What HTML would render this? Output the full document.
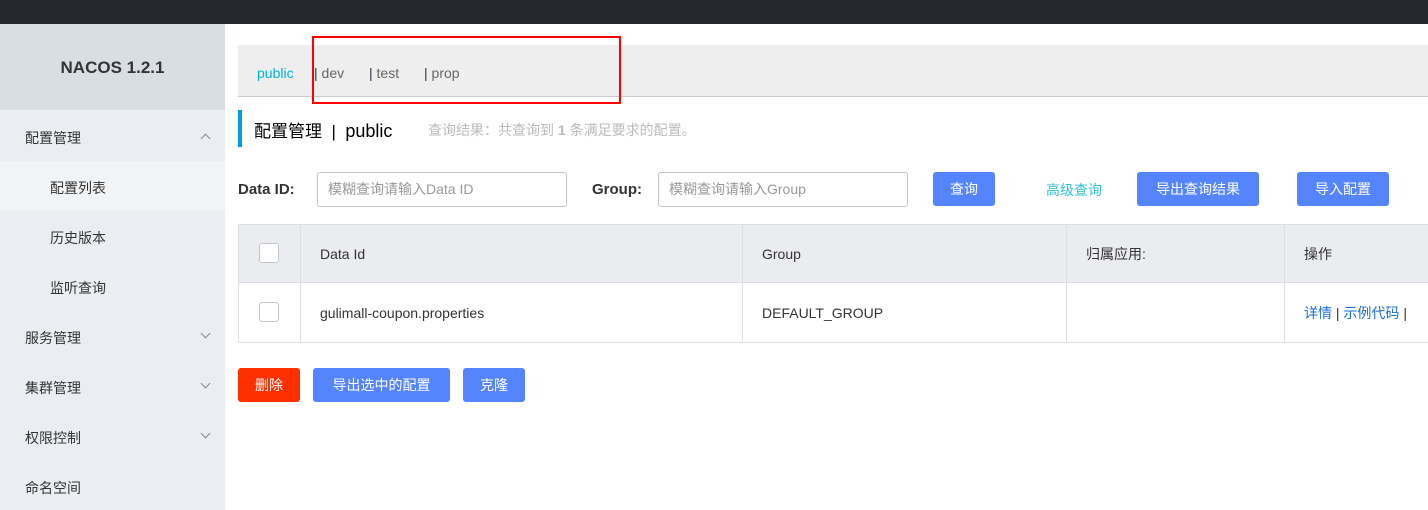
<!DOCTYPE html>
<html><head><meta charset="utf-8"><style>
*{margin:0;padding:0;box-sizing:border-box}
body{width:1428px;height:510px;overflow:hidden;background:#fff;font-family:"Liberation Sans","Noto Sans CJK SC",sans-serif;font-size:14px;color:#333;position:relative}
.a{position:absolute}
.side{left:0;top:24px;width:225px;height:486px;background:#eaedf1}
.mi{position:absolute;left:25px;font-size:14px;color:#333}
.chev{position:absolute;left:202px;width:7px;height:7px;border-right:1px solid #888;border-bottom:1px solid #888}
.btn{position:absolute;height:34px;line-height:34px;color:#fff;background:#5584ff;border-radius:3px;text-align:center;font-size:14px}
.inp{position:absolute;top:172px;height:35px;border:1px solid #c4c6cf;border-radius:3px;color:#999;padding-left:10px;line-height:33px;font-size:14px}
.lbl{position:absolute;top:181px;font-weight:bold;font-size:15px;color:#333}
.cb{position:absolute;left:259px;width:20px;height:20px;border:1px solid #c4c6cf;border-radius:3px;background:#fff}
.vl{position:absolute;width:1px;background:#dcdee3}
</style></head><body>
<div class="a" style="left:0;top:0;width:1428px;height:24px;background:#24282d"></div>
<div class="a side"></div>
<div class="a" style="left:0;top:24px;width:225px;height:86px;background:#d9dee5"></div>
<div class="a" style="left:0;top:58px;width:225px;text-align:center;font-weight:bold;font-size:17px;color:#333">NACOS 1.2.1</div>
<div class="mi" style="top:128px">配置管理</div>
<div class="chev" style="top:135px;transform:rotate(-135deg)"></div>
<div class="a" style="left:0;top:161px;width:225px;height:50px;background:#f2f3f5"></div>
<div class="mi" style="left:50px;top:178px">配置列表</div>
<div class="mi" style="left:50px;top:228px">历史版本</div>
<div class="mi" style="left:50px;top:278px">监听查询</div>
<div class="mi" style="top:328px">服务管理</div><div class="chev" style="top:330px;transform:rotate(45deg)"></div>
<div class="mi" style="top:378px">集群管理</div><div class="chev" style="top:380px;transform:rotate(45deg)"></div>
<div class="mi" style="top:428px">权限控制</div><div class="chev" style="top:430px;transform:rotate(45deg)"></div>
<div class="mi" style="top:478px">命名空间</div>

<div class="a" style="left:238px;top:45px;width:1190px;height:52px;background:#eee;border-bottom:1px solid #ccc"></div>
<div class="a" style="left:257px;top:65px;font-size:14px;color:#00b3d8">public</div>
<div class="a" style="left:314px;top:65px;font-size:14px;color:#666"><span style="color:#334">|</span> dev</div>
<div class="a" style="left:369px;top:65px;font-size:14px;color:#666"><span style="color:#334">|</span> test</div>
<div class="a" style="left:424px;top:65px;font-size:14px;color:#666"><span style="color:#334">|</span> prop</div>
<div class="a" style="left:312px;top:36px;width:309px;height:68px;border:2px solid #f00"></div>

<div class="a" style="left:238px;top:110px;width:4px;height:37px;background:#009fd8"></div>
<div class="a" style="left:254px;top:117px;font-size:17px;color:#000">配置管理 &nbsp;|&nbsp; <span style="font-size:18px">public</span></div>
<div class="a" style="left:428px;top:120px;font-size:14px;color:#bbb">查询结果：共查询到 <b>1</b> 条满足要求的配置。</div>

<div class="lbl" style="left:238px">Data ID:</div>
<div class="inp" style="left:317px;width:250px">模糊查询请输入Data ID</div>
<div class="lbl" style="left:592px">Group:</div>
<div class="inp" style="left:658px;width:250px">模糊查询请输入Group</div>
<div class="btn" style="left:933px;top:172px;width:62px">查询</div>
<div class="a" style="left:1046px;top:180px;color:#33c1d8">高级查询</div>
<div class="btn" style="left:1137px;top:172px;width:122px">导出查询结果</div>
<div class="btn" style="left:1297px;top:172px;width:92px">导入配置</div>

<div class="a" style="left:238px;top:224px;width:1190px;height:59px;background:#ebecf0;border-top:1px solid #dcdee3;border-bottom:1px solid #dcdee3"></div>
<div class="a" style="left:238px;top:342px;width:1190px;height:1px;background:#dcdee3"></div>
<div class="vl" style="left:238px;top:224px;height:119px"></div>
<div class="vl" style="left:300px;top:224px;height:119px"></div>
<div class="vl" style="left:742px;top:224px;height:119px"></div>
<div class="vl" style="left:1066px;top:224px;height:119px"></div>
<div class="vl" style="left:1284px;top:224px;height:119px"></div>
<div class="cb" style="top:243px"></div>
<div class="cb" style="top:302px"></div>
<div class="a" style="left:320px;top:246px">Data Id</div>
<div class="a" style="left:762px;top:246px">Group</div>
<div class="a" style="left:1086px;top:244px">归属应用:</div>
<div class="a" style="left:1304px;top:244px">操作</div>
<div class="a" style="left:320px;top:305px">gulimall-coupon.properties</div>
<div class="a" style="left:762px;top:305px">DEFAULT_GROUP</div>
<div class="a" style="left:1304px;top:303px;color:#1a6fd4">详情 <span style="color:#333">|</span> 示例代码 <span style="color:#333">|</span></div>

<div class="btn" style="left:238px;top:368px;width:62px;background:#ff3000">删除</div>
<div class="btn" style="left:313px;top:368px;width:137px">导出选中的配置</div>
<div class="btn" style="left:463px;top:368px;width:62px">克隆</div>
</body></html>
